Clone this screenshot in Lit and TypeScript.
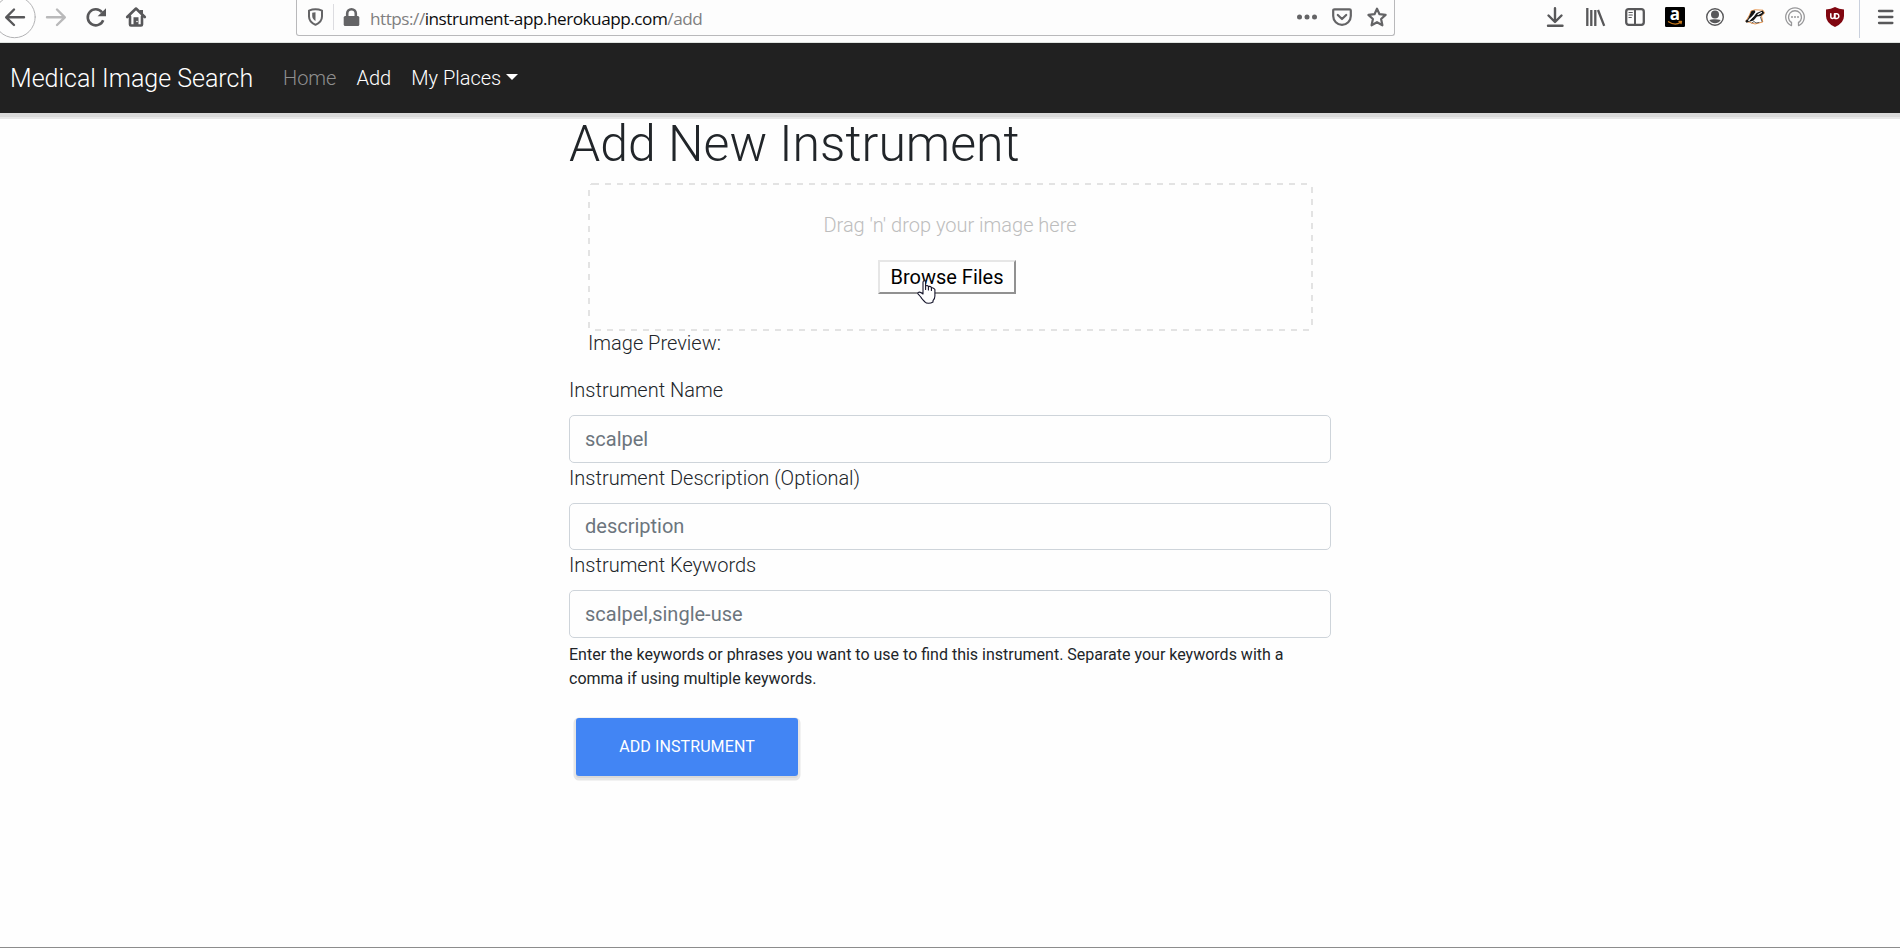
import { LitElement, html, css } from "lit";
import { customElement } from "lit/decorators.js";

@customElement("browser-bar")
class BrowserBar extends LitElement {
  static styles = css`
    :host { display: flex; height: 42px; background: #fdfdfd; border-bottom: 1px solid #dfe3e0; color: #58585a; overflow: hidden; }
    svg { display: block; flex: none; overflow: visible; fill: none; stroke: currentColor; stroke-width: 2; stroke-linecap: round; stroke-linejoin: round; }
    .i { width: 20px; height: 20px; margin-top: 7px; }
    .nav { display: flex; flex: none; gap: 20px; padding-left: 5px; width: 296px; box-sizing: border-box; }
    .url { display: flex; flex: none; width: 1099px; height: 36px; box-sizing: border-box; border: 1px solid #b9b9bb; border-top: 0; border-radius: 0 0 3px 3px; padding-left: 9px; color: #646466; }
    .sep { width: 1px; height: 26px; margin: 4px 8px 0 7px; background: #dcdce0; flex: none; }
    .text { font: 17.2px/24px "Open Sans", "Noto Sans", sans-serif; margin: 7px 0 0 8px; color: #808080; white-space: nowrap; flex: 1; letter-spacing: -0.49px; }
    b { font-weight: 400; color: #0c0c0d; }
    .actions { display: flex; gap: 15px; padding-right: 7px; }
    .ext { display: flex; gap: 20px; padding-left: 150px; }
    .bar { width: 1px; height: 38px; background: #c9d0dd; margin: 0 16px 0 14px; }
    .dim { color: #b9b9ba; }
    .f { fill: currentColor; stroke: none; }
    .glyph { stroke: none; fill: #fff; font-family: "Open Sans", sans-serif; font-weight: 700; }
  `;
  render() {
    return html`
      <div class="nav">
        <svg class="i" viewBox="0 0 20 20"><circle cx="9.5" cy="10" r="20.7" stroke="#b3b3b5" stroke-width="1" fill="#fefefe"/><path stroke-width="2.4" d="M19 10.3H1.5M9 2.5L1.2 10.3L9 18"/></svg>
        <svg class="i dim" viewBox="-1 0 20 20"><path stroke-width="2.4" d="M1 10.3H18.5M11 2.5L18.8 10.3L11 18"/></svg>
        <svg class="i" viewBox="-1 0 20 20"><path stroke-width="2.6" stroke-linecap="butt" d="M17.2 13.2A8 8 0 1 1 16 5.3"/><path class="f" d="M20 1.2V9.3H11.6Z"/></svg>
        <svg class="i" viewBox="-1 0 20 20"><path stroke-width="2.6" d="M1.2 10L10 1.5L18.8 10M4 9.5V17.4Q4 18.5 5 18.5H15Q16 18.5 16 17.4V9.5"/><path class="f" d="M14 3h3v4l-3-2zM7.5 10.2h5V18h-5z"/><circle cx="11" cy="14.5" r=".8" fill="#fff" stroke="none"/></svg>
      </div>
      <div class="url">
        <svg class="i" viewBox="-1.5 0 20 20"><path d="M8 2.3C10.5 2.3 12.5 2.8 14.5 3.6V9.5C14.5 13 12 16 8 17.8C4 16 1.5 13 1.5 9.5V3.6C3.5 2.8 5.5 2.3 8 2.3Z"/><path class="f" d="M8 5.2V14C6 12.8 4.7 11 4.7 9V5.8Q6 5.3 8 5.2Z"/></svg>
        <div class="sep"></div>
        <svg class="i" viewBox="-1.2 0 20 20"><rect class="f" x=".5" y="9" width="15.6" height="10" rx="1.5"/><path stroke-width="2.6" d="M4 9V6.5a4.3 4.3 0 0 1 8.6 0V9"/></svg>
        <div class="text">https://<b>instrument-app.herokuapp.com</b>/add</div>
        <div class="actions">
          <svg class="i" viewBox="0 0 20 20"><g class="f"><circle cx="2.5" cy="10" r="2.5"/><circle cx="10" cy="10" r="2.5"/><circle cx="17.5" cy="10" r="2.5"/></g></svg>
          <svg class="i" viewBox="0 0 20 20"><path stroke-width="2.2" d="M2.5 2.3H17.5Q18.8 2.3 18.8 3.6V9A8.8 8.8 0 0 1 1.2 9V3.6Q1.2 2.3 2.5 2.3ZM5.8 8L10 12L14.2 8"/></svg>
          <svg class="i" viewBox="0 0 20 20"><path stroke-width="2.2" d="M10 1.7L12.5 7.2L18.6 7.9L14.1 12L15.4 18.3L10 15.2L4.6 18.3L5.9 12L1.4 7.9L7.5 7.2Z"/></svg>
        </div>
      </div>
      <div class="ext">
        <svg class="i" viewBox="0 0 20 20"><path stroke-width="2.4" d="M10 1.3V14M3.5 8.5L10 15L16.5 8.5M3 18.8H17.5"/></svg>
        <svg class="i" viewBox="0 0 20 20"><path stroke-width="2.3" stroke-linecap="butt" d="M2.3 1V19M6.3 3V19M10.3 3V19M13 3L19.2 18.8"/></svg>
        <svg class="i" viewBox="0 0 20 20"><rect x="1.2" y="2.2" width="17.6" height="15.6" rx="2.5" stroke-width="2.3"/><path stroke-width="2" d="M10 2.5V17.5"/><path stroke-width="1.2" d="M4 5.5H7.3M4 8H7.3M4 10.5H6.3"/></svg>
        <svg class="i" viewBox="0 0 20 20"><rect width="20" height="20" rx="1.2" fill="#000" stroke="none"/><text class="glyph" x="10" y="12.6" font-size="17" text-anchor="middle">a</text><path stroke="#c8791c" stroke-width="1.3" d="M3.5 14.8Q10 19 15.5 15.5M14 14.5L16.5 14.3L16 16.5"/></svg>
        <svg class="i" viewBox="0 0 20 20"><circle cx="10" cy="10" r="8.3" stroke-width="1.4"/><circle class="f" cx="10" cy="7.5" r="4"/><path class="f" d="M4.3 13Q7 12 10 12.3T15.7 13Q13.5 16.3 10 16.3T4.3 13Z"/></svg>
        <svg class="i" viewBox="0 0 20 20"><path d="M1 14L4.5 8L6 4L10 2.8L18 3.2L19.5 6L16.5 9L17.8 15L10 17L5 15.5Z" fill="#fff" stroke="#e8964f" stroke-width="1"/><path fill="#161616" stroke="none" d="M6.5 4L9.5 3.2L10.5 5L7 9.5L2 14L4.5 8.5ZM8 10L10.5 6.5L17.5 3.4L19.3 6L16 9L12 9.5L8.5 13.5L3.5 15ZM.3 14L2.5 12.3L4 14.8L1.5 15.8Z"/><path stroke="#fff" stroke-width="1.1" d="M4.5 12.5L9 8.5L11.5 5.2M13 7.5L16.5 5.5"/><path stroke="#333" stroke-width=".8" d="M7 16L9 14.5L11 16L14 15.5M15.5 10L17 14.5"/></svg>
        <svg class="i" viewBox="0 0 20 20"><g stroke="#98989a" stroke-width="1.3"><path d="M6 18.5A9.3 9.3 0 1 1 14 18.5M6.2 15.5A6.5 6.5 0 1 1 13.8 15.5M6.5 15.2V18.5M13.5 15.2V18.5"/></g><g fill="#98989a" stroke="none"><circle cx="7" cy="10" r="1"/><circle cx="10" cy="10" r="1"/><circle cx="13" cy="10" r="1"/></g></svg>
        <svg class="i" viewBox="0 0 20 20"><path fill="#800610" stroke="none" d="M10 0Q14 2.4 19 2.6V9Q19 16 10 20Q1 16 1 9V2.6Q6 2.4 10 0Z"/><path stroke="#fff" stroke-width="1.5" d="M5.8 6.8V9.5Q5.8 11.5 7.5 11.5T9.5 9.5V6.8M9.5 6.8H12A2.4 2.4 0 0 1 12 11.5H10V8"/></svg>
      </div>
      <div class="bar"></div>
      <svg class="i" viewBox="-1 0 20 20"><path stroke-width="2.3" d="M2 4H15.4M2 10H15.4M2 16H15.4"/></svg>
    `;
  }
}

@customElement("site-nav")
class SiteNav extends LitElement {
  static styles = css`
    :host { display: flex; flex: none; align-items: center; height: 70px; padding-left: 10px; background: #212121; color: #fff; font: 300 20px/30px Roboto, sans-serif; box-shadow: 0 4px 0 #d9d9d9, 0 6px 0 #e8e8e8; position: relative; }
    .brand { font-size: 25px; width: 273px; padding-top: 2px; }
    .link { margin-right: 20px; }
    .muted { color: #8f8f8f; }
    .caret { display: inline-block; margin-left: 5px; vertical-align: 5px; border: 6px solid transparent; border-top-color: #fff; border-bottom: 0; }
  `;
  render() {
    return html`
      <span class="brand">Medical Image Search</span>
      <span class="link muted">Home</span><span class="link">Add</span>
      <span>My Places<i class="caret"></i></span>
    `;
  }
}

const fields = [
  { label: "Instrument Name", hint: "scalpel" },
  { label: "Instrument Description (Optional)", hint: "description" },
  { label: "Instrument Keywords", hint: "scalpel,single-use" },
];

@customElement("app-root")
class AppRoot extends LitElement {
  static styles = css`
    :host { display: flex; flex-direction: column; height: 948px; box-sizing: border-box; background: #fefefe; border-bottom: 1px solid #8c8c8c; overflow: hidden; font: 300 20px/30px Roboto, sans-serif; color: #212529; }
    main { width: 762px; margin-left: 569px; }
    h1 { font-size: 50px; line-height: 60px; font-weight: 300; margin: 0; padding: 1px 0 9px; }
    .upload { margin: 0 18px 0 19px; height: 192px; }
    .drop { height: 148px; box-sizing: border-box; padding-top: 27px; display: flex; flex-direction: column; align-items: center; color: #bdbdbd; position: relative; }
    .hint { margin-right: 1px; }
    .edge { position: absolute; inset: 0; width: 100%; height: 100%; fill: none; stroke: #e3e3e3; stroke-width: 2; stroke-dasharray: 6 6; shape-rendering: crispEdges; }
    .browse { margin: 20px 7px 0 0; width: 138px; height: 34px; box-sizing: border-box; padding: 0; border: 2px solid; border-color: #e6e6e6 #919191 #919191 #e6e6e6; background: #fefefe; color: #000; font: 400 20px/28px Roboto, sans-serif; position: relative; }
    .cursor { position: absolute; left: 37px; top: 18px; width: 19px; height: 24px; }
    .preview { line-height: 24px; }
    label { display: block; margin-bottom: 10px; }
    input { display: block; width: 100%; height: 47.5px; box-sizing: border-box; padding: 0 15px; border: 1px solid #ced4da; border-radius: 5px; background: #fefefe; font: 400 20px/30px Roboto, sans-serif; }
    input::placeholder { color: #6c757d; opacity: 1; }
    .help { font-size: 16px; line-height: 24px; font-weight: 400; margin: 5.5px 0 27px; }
    .submit { display: block; margin-left: 7px; width: 222px; height: 58px; padding: 0; border: 0; border-radius: 3px; background: #4285f4; color: #fff; font: 400 16px/24px Roboto, sans-serif; letter-spacing: 0.1px; box-shadow: 0 2px 0 #d9d9d9, 0 2px 0 2.5px #e6e6e6; }
  `;
  render() {
    return html`
      <browser-bar></browser-bar>
      <site-nav></site-nav>
      <main>
        <h1>Add New Instrument</h1>
        <div class="upload">
          <div class="drop">
            <svg class="edge"><rect x="1" y="1" width="723" height="146" rx="4"/></svg>
            <span class="hint">Drag 'n' drop your image here</span>
            <button class="browse">Browse Files
              <svg class="cursor" viewBox="0 0 19 24"><path fill="#fefefe" stroke="#15152b" stroke-width="1.1" stroke-linejoin="round" d="M6 14V2.2Q6 .8 7.3 .8T8.6 2.2V9.5V6.5Q8.6 5.5 9.8 5.5T11.4 6.5V10V7.2Q11.6 6.3 12.8 6.4T14.4 7.5V10.5V8.3Q14.8 7.5 16 7.9T17.9 9.5V16Q17.9 19 16 20.7V22Q14 23.3 11.5 23.3Q9 23.3 8 22Q4.5 18.5 3.8 17L1 13.8Q.6 12.7 1.7 12.2Q3 11.8 4.2 12.8Z"/></svg>
            </button>
          </div>
          <div class="preview">Image Preview:</div>
        </div>
        ${fields.map((f) => html`<label>${f.label}</label><input placeholder=${f.hint} />`)}
        <p class="help">Enter the keywords or phrases you want to use to find this instrument. Separate your keywords with a comma if using multiple keywords.</p>
        <button class="submit">ADD INSTRUMENT</button>
      </main>
    `;
  }
}
